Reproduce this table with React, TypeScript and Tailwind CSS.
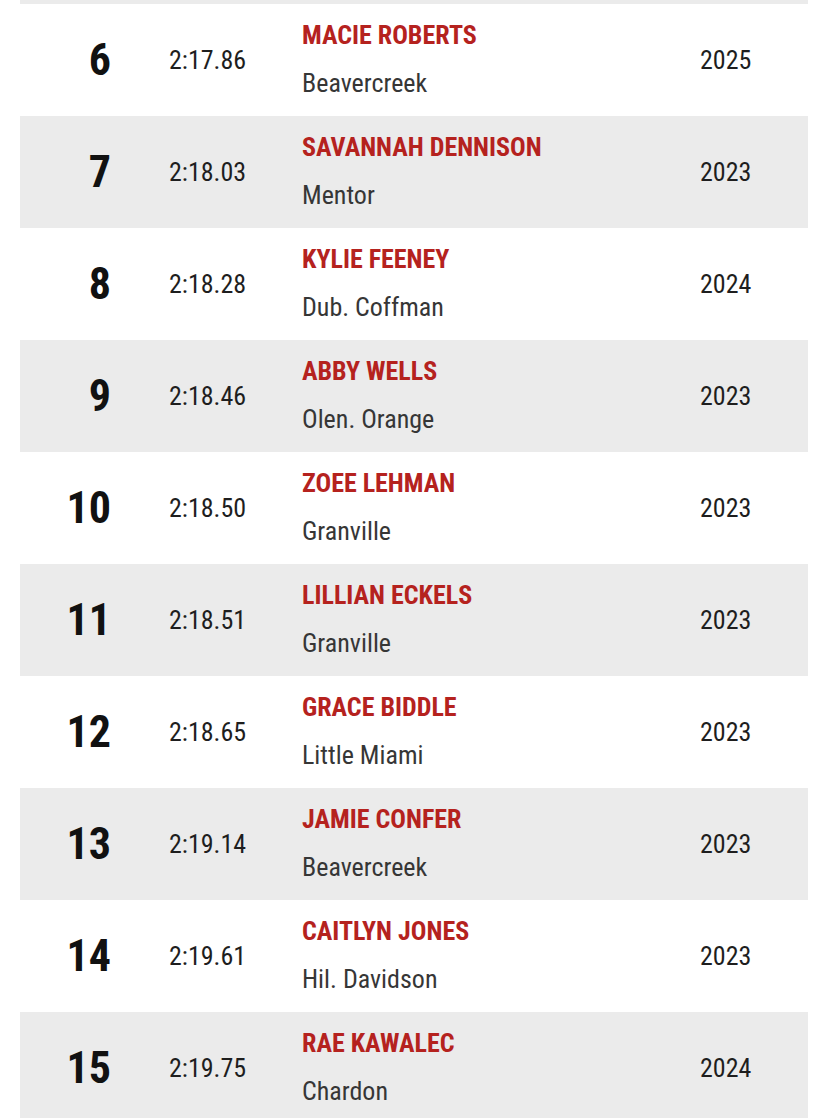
import React from "react";

const rows = [
  { rank: 6, time: "2:17.86", name: "MACIE ROBERTS", school: "Beavercreek", year: "2025" },
  { rank: 7, time: "2:18.03", name: "SAVANNAH DENNISON", school: "Mentor", year: "2023" },
  { rank: 8, time: "2:18.28", name: "KYLIE FEENEY", school: "Dub. Coffman", year: "2024" },
  { rank: 9, time: "2:18.46", name: "ABBY WELLS", school: "Olen. Orange", year: "2023" },
  { rank: 10, time: "2:18.50", name: "ZOEE LEHMAN", school: "Granville", year: "2023" },
  { rank: 11, time: "2:18.51", name: "LILLIAN ECKELS", school: "Granville", year: "2023" },
  { rank: 12, time: "2:18.65", name: "GRACE BIDDLE", school: "Little Miami", year: "2023" },
  { rank: 13, time: "2:19.14", name: "JAMIE CONFER", school: "Beavercreek", year: "2023" },
  { rank: 14, time: "2:19.61", name: "CAITLYN JONES", school: "Hil. Davidson", year: "2023" },
  { rank: 15, time: "2:19.75", name: "RAE KAWALEC", school: "Chardon", year: "2024" },
];

export default function App() {
  return (
    <div
      className="w-[828px] h-[1118px] overflow-hidden bg-white px-[20px]"
      style={{ fontFamily: '"Roboto Condensed", Roboto, "Liberation Sans", sans-serif' }}
    >
      <div className="h-[4px] bg-[#ebebeb]" />
      {rows.map((r, i) => (
        <div
          key={r.rank}
          className={`flex items-center h-[112px] ${i % 2 === 1 ? "bg-[#ebebeb]" : "bg-white"}`}
        >
          <div className="w-[91px] shrink-0 text-right text-[44px] font-bold text-[#111] leading-none">
            {r.rank}
          </div>
          <div className="w-[191px] shrink-0 pl-[58px] text-[26px] text-[#1e1e1e] leading-none">
            {r.time}
          </div>
          <div className="flex-1 h-full flex flex-col justify-center pb-[2px]">
            <div className="text-[26px] leading-[48px] font-bold text-[#b5221e]">{r.name}</div>
            <div className="text-[26px] leading-[48px] text-[#363636]">{r.school}</div>
          </div>
          <div className="w-[108px] shrink-0 text-[26px] text-[#1e1e1e] leading-none">
            {r.year}
          </div>
        </div>
      ))}
    </div>
  );
}
